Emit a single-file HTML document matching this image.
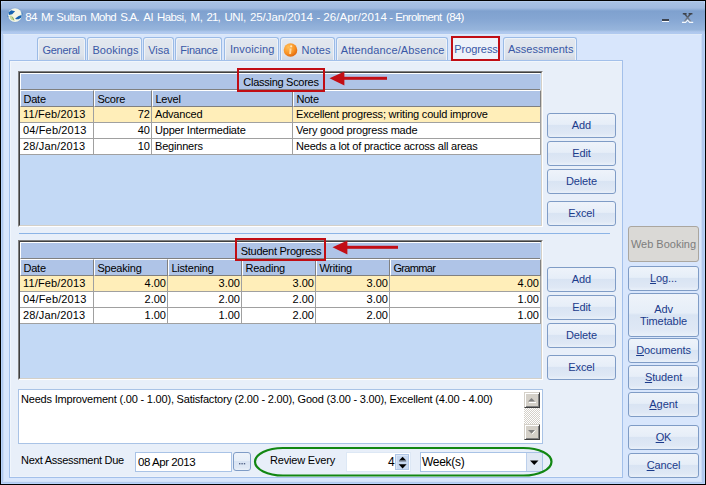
<!DOCTYPE html>
<html><head><meta charset="utf-8">
<style>
*{box-sizing:border-box;margin:0;padding:0}
html,body{width:706px;height:485px;overflow:hidden;background:#000}
body{font-family:"Liberation Sans",sans-serif;font-size:11px;color:#000;position:relative}
.a{position:absolute}
#win{left:0;top:0;width:706px;height:485px;background:#d8e6fc;border:1px solid #000;border-bottom:1px solid #000}
#frameL{left:1px;top:1px;width:1px;height:483px;background:#b6cdef}
#frameR{left:702px;top:33px;width:3px;height:451px;background:#b0c8ee}
#frameB{left:1px;top:483px;width:704px;height:1px;background:#b0c8ee}
#title{left:1px;top:1px;width:704px;height:33px;
 background:linear-gradient(to bottom,#c0d5f3 0px,#a8c1e4 1px,#a0bae0 7px,#7fa1cf 10px,#85a6d3 18px,#97b5dc 29px,#a6c1e5 30px,#afc8ee 31px,#b1caef 33px);
 border-radius:5px 5px 0 0}
.tw{position:absolute;top:10px;color:#fff;font-size:11.5px;letter-spacing:-0.3px;white-space:nowrap;line-height:14px}
#tabs .t{position:absolute;top:37px;height:23px;border:1px solid #9bbbe6;border-bottom:none;border-radius:3px 3px 0 0;background:linear-gradient(to bottom,#e3e8ef 0%,#dde3eb 75%,#d1d8e3 100%);box-shadow:inset 1px 1px 0 #eef2f8,inset -1px 0 0 #eef2f8}
.tt{position:absolute;top:43px;color:#3a58a6;font-size:11px;line-height:14px;white-space:nowrap}
#panel{left:9px;top:60px;width:614px;height:418px;border:1px solid #a3c0ea;background:#e8eff9;box-shadow:inset 1px 1px 0 #f1f6fc,inset 0 -1px 0 #edf3fb}
.grid{position:absolute;border-top:1px solid #808080;border-left:1px solid #808080;border-right:1px solid #fff;border-bottom:1px solid #fff}
.gin{position:absolute;left:0;top:0;right:0;bottom:0;border-top:1px solid #404040;border-left:1px solid #404040;border-right:1px solid #d4d0c8;border-bottom:1px solid #d4d0c8;background:#c3d9f5;overflow:hidden}
.gh{position:absolute;left:0;top:0;width:520px;height:17px;background:#afc4e7;border-top:1px solid #fff;border-left:1px solid #fff;border-bottom:1px solid #808080}
.gh span{position:absolute;white-space:nowrap;letter-spacing:-0.28px;line-height:13px}
.ch{position:absolute;top:17px;height:17px;background:#afc4e7;border-top:1px solid #fff;border-left:1px solid #fff;border-right:1px solid #808080;border-bottom:1px solid #808080;white-space:nowrap;padding-left:2.4px;padding-top:1px;line-height:14px;letter-spacing:-0.2px}
.row{position:absolute;left:0;height:16px}
.c{position:absolute;top:0;height:16px;border-right:1px solid #a0a0a0;border-bottom:1px solid #a0a0a0;white-space:nowrap;line-height:15px;padding:0 1px 0 3px;letter-spacing:-0.2px;overflow:hidden}
.r{text-align:right;letter-spacing:0}
.d{letter-spacing:0.15px}
.y{background:#ffeeb9}
.w{background:#fff}
.btn{position:absolute;border:1px solid #7f9cc6;border-radius:3px;background:linear-gradient(to bottom,#eef3fa 0%,#e6eef8 45%,#d9e4f3 50%,#dfe8f5 85%,#e9f0f9 100%);color:#1b3b8b;text-align:center;white-space:nowrap;letter-spacing:-0.1px}
.u{text-decoration:underline}
.sb{width:16px;height:16px;background:#d4d0c8;border-top:1px solid #d4d0c8;border-left:1px solid #d4d0c8;border-right:1px solid #404040;border-bottom:1px solid #404040;box-shadow:inset 1px 1px 0 #fff,inset -1px -1px 0 #808080}
.red{position:absolute;border:2px solid #c10d14}
</style></head><body>
<div id="win" class="a"></div>
<div class="a" style="left:1px;top:1px;width:1px;height:483px;background:#b9d5fc"></div>
<div class="a" style="left:2px;top:1px;width:1px;height:482px;background:#b1c9ee"></div>
<div class="a" style="left:3px;top:1px;width:1px;height:481px;background:#cadcf6"></div>
<div class="a" style="left:704px;top:1px;width:1px;height:483px;background:#b9d5fc"></div>
<div class="a" style="left:702px;top:1px;width:2px;height:482px;background:#b1c9ee"></div>
<div class="a" style="left:701px;top:1px;width:1px;height:481px;background:#cadcf6"></div>
<div class="a" style="left:1px;top:483px;width:704px;height:1px;background:#b9d5fc"></div>
<div class="a" style="left:2px;top:482px;width:702px;height:1px;background:#b1c9ee"></div>
<div class="a" style="left:3px;top:481px;width:699px;height:1px;background:#d2e2f7"></div>
<div class="a" style="left:3px;top:34px;width:699px;height:1px;background:#dfeaf8"></div>
<div id="title" class="a">
</div>
<!-- globe icon -->
<svg class="a" style="left:0px;top:0px" width="30" height="30" viewBox="0 0 30 30">
 <circle cx="15" cy="15.1" r="7.6" fill="#6f9fd6" opacity="0.35"/>
 <circle cx="15" cy="15.1" r="6.9" fill="#f3f5e6"/>
 <path d="M9.5 16 Q11 15 12.5 16.5 L14 19.5 Q12 21 10.5 19 Z" fill="#b9d08e" opacity="0.85"/>
 <path d="M12.5 17 L14 20.5" stroke="#7fa84a" stroke-width="1" opacity="0.8"/>
 <path d="M8.5 12.6 L11.1 10.2 L15.1 11.3 L12.2 14.3 L8.9 14.9 Z" fill="#1462b0"/>
 <path d="M15.2 18.5 L18.6 16.1 L21.6 15 L21.4 17.4 L18.6 19.3 L16 19.3 Z" fill="#1462b0"/>
 <path d="M21.6 12 L22.6 13 L22.4 15.5 L21.6 15 Z" fill="#2a70b8" opacity="0.7"/>
 <path d="M7.6 15 L8.6 16.2 L8.4 17.6 L7.4 16.8 Z" fill="#2a70b8" opacity="0.6"/>
</svg>
<span class="tw" style="left:25.2px;letter-spacing:-0.59px">84</span><span class="tw" style="left:41.0px;letter-spacing:-0.9px">Mr</span><span class="tw" style="left:56.3px;letter-spacing:-0.44px">Sultan</span><span class="tw" style="left:90.3px;letter-spacing:-0.79px">Mohd</span><span class="tw" style="left:120.3px;letter-spacing:-0.78px">S.A.</span><span class="tw" style="left:143.3px;letter-spacing:-0.23px">Al</span><span class="tw" style="left:156.9px;letter-spacing:-0.54px">Habsi,</span><span class="tw" style="left:190.4px;letter-spacing:-0.27px">M,</span><span class="tw" style="left:206.5px;letter-spacing:-0.84px">21,</span><span class="tw" style="left:224.4px;letter-spacing:-0.37px">UNI,</span><span class="tw" style="left:249.9px;letter-spacing:-0.03px">25/Jan/2014</span><span class="tw" style="left:316.5px;letter-spacing:0px">-</span><span class="tw" style="left:323.3px;letter-spacing:0.09px">26/Apr/2014</span><span class="tw" style="left:389.3px;letter-spacing:0px">-</span><span class="tw" style="left:395.2px;letter-spacing:-0.69px">Enrolment</span><span class="tw" style="left:446.1px;letter-spacing:-0.75px">(84)</span>
<!-- min / close -->
<div class="a" style="left:662px;top:19px;width:7px;height:2px;background:#3d4450"></div>
<div class="a" style="left:662px;top:21px;width:7px;height:1px;background:#f4f8fd"></div>
<svg class="a" style="left:681px;top:12px" width="14" height="12" viewBox="0 0 14 12">
 <defs><linearGradient id="xg" x1="0" y1="0" x2="0" y2="1"><stop offset="0" stop-color="#3a3f48"/><stop offset="1" stop-color="#8d9aae"/></linearGradient></defs>
 <path d="M1.8 1 H5.6 V2.4 H1.8 Z M7.6 1 H11.4 V2.4 H7.6 Z" fill="#3d434c"/>
 <path d="M3.6 1.8 L10 9.8 M9.6 1.8 L3.2 9.8" stroke="url(#xg)" stroke-width="1.5" fill="none"/>
 <path d="M1 10.4 H4.6 L6.6 8.2 L8.6 10.4 H12.2" stroke="#f4f8fd" stroke-width="1.1" fill="none"/>
</svg>

<div id="panel" class="a"></div>

<div id="tabs">
 <div class="t" style="left:37px;width:49px;"></div><span class="tt" style="left:42.4px;letter-spacing:-0.25px">General</span>
 <div class="t" style="left:87px;width:55px;"></div><span class="tt" style="left:92.4px;letter-spacing:0.12px">Bookings</span>
 <div class="t" style="left:143px;width:31px;"></div><span class="tt" style="left:148.2px;letter-spacing:0px">Visa</span>
 <div class="t" style="left:175px;width:47px;"></div><span class="tt" style="left:180.3px;letter-spacing:-0.25px">Finance</span>
 <div class="t" style="left:224px;width:55px;"></div><span class="tt" style="left:229.9px;top:42px;letter-spacing:0.13px">Invoicing</span>
 <div class="t" style="left:280px;width:55px;"></div><span class="tt" style="left:301.5px;letter-spacing:0.05px">Notes</span>
 <div class="t" style="left:336px;width:112px;"></div><span class="tt" style="left:340.7px;letter-spacing:0.13px">Attendance/Absence</span>
 <div class="t" style="left:451px;width:49px;background:#edf2fa;border-color:#c5d7ef;"></div><span class="tt" style="left:454.3px;top:42px;letter-spacing:-0.07px">Progress</span>
 <div class="t" style="left:503px;width:74px;"></div><span class="tt" style="left:508.0px;top:42px;letter-spacing:0px">Assessments</span>
</div>
<svg class="a" style="left:283px;top:42px" width="15" height="15" viewBox="0 0 15 15">
 <defs><radialGradient id="og" cx="0.35" cy="0.3" r="0.75"><stop offset="0" stop-color="#ffbf5a"/><stop offset="0.6" stop-color="#f99426"/><stop offset="1" stop-color="#e0660c"/></radialGradient></defs>
 <circle cx="7.5" cy="8" r="6.8" fill="url(#og)"/>
 <circle cx="8.2" cy="4.3" r="1.1" fill="#ffe9c0"/>
 <path d="M6.6 6.5 L8.6 6.5 L8 12 L6.2 12 Z" fill="#ffd8a0"/>
</svg>

<!-- GRID 1 -->
<div class="grid" style="left:18px;top:71px;width:525px;height:156px">
 <div class="gin">
  <div class="gh"><span style="left:0;width:520px;text-align:center;top:2px">Classing Scores</span></div>
  <div class="ch" style="left:0;width:74px">Date</div>
  <div class="ch" style="left:74px;width:58px">Score</div>
  <div class="ch" style="left:132px;width:141px">Level</div>
  <div class="ch" style="left:273px;width:248px">Note</div>
  <div class="row" style="top:34px">
   <div class="c y d" style="left:0;width:74px">11/Feb/2013</div>
   <div class="c y r" style="left:74px;width:58px">72</div>
   <div class="c y" style="left:132px;width:141px">Advanced</div>
   <div class="c y" style="left:273px;width:248px">Excellent progress; writing could improve</div>
  </div>
  <div class="row" style="top:50px">
   <div class="c w d" style="left:0;width:74px">04/Feb/2013</div>
   <div class="c w r" style="left:74px;width:58px">40</div>
   <div class="c w" style="left:132px;width:141px">Upper Intermediate</div>
   <div class="c w" style="left:273px;width:248px">Very good progress made</div>
  </div>
  <div class="row" style="top:66px">
   <div class="c w d" style="left:0;width:74px">28/Jan/2013</div>
   <div class="c w r" style="left:74px;width:58px">10</div>
   <div class="c w" style="left:132px;width:141px">Beginners</div>
   <div class="c w" style="left:273px;width:248px">Needs a lot of practice across all areas</div>
  </div>
 </div>
</div>

<div class="btn" style="left:547px;top:113px;width:69px;height:25px;line-height:23px">Add</div>
<div class="btn" style="left:547px;top:141px;width:69px;height:25px;line-height:23px">Edit</div>
<div class="btn" style="left:547px;top:169px;width:69px;height:25px;line-height:23px">Delete</div>
<div class="btn" style="left:547px;top:201px;width:69px;height:25px;line-height:23px">Excel</div>

<div class="a" style="left:19px;top:233px;width:591px;height:1px;background:#8cb4e6"></div>

<!-- GRID 2 -->
<div class="grid" style="left:18px;top:240px;width:525px;height:140px">
 <div class="gin">
  <div class="gh"><span style="left:0;width:520px;text-align:center;top:2px">Student Progress</span></div>
  <div class="ch" style="left:0;width:74px">Date</div>
  <div class="ch" style="left:74px;width:74px">Speaking</div>
  <div class="ch" style="left:148px;width:74px">Listening</div>
  <div class="ch" style="left:222px;width:74px">Reading</div>
  <div class="ch" style="left:296px;width:74px">Writing</div>
  <div class="ch" style="left:370px;width:151px;letter-spacing:-0.65px">Grammar</div>
  <div class="row" style="top:34px">
   <div class="c y d" style="left:0;width:74px">11/Feb/2013</div>
   <div class="c y r" style="left:74px;width:74px">4.00</div>
   <div class="c y r" style="left:148px;width:74px">3.00</div>
   <div class="c y r" style="left:222px;width:74px">3.00</div>
   <div class="c y r" style="left:296px;width:74px">3.00</div>
   <div class="c y r" style="left:370px;width:151px">4.00</div>
  </div>
  <div class="row" style="top:50px">
   <div class="c w d" style="left:0;width:74px">04/Feb/2013</div>
   <div class="c w r" style="left:74px;width:74px">2.00</div>
   <div class="c w r" style="left:148px;width:74px">2.00</div>
   <div class="c w r" style="left:222px;width:74px">2.00</div>
   <div class="c w r" style="left:296px;width:74px">3.00</div>
   <div class="c w r" style="left:370px;width:151px">1.00</div>
  </div>
  <div class="row" style="top:66px">
   <div class="c w d" style="left:0;width:74px">28/Jan/2013</div>
   <div class="c w r" style="left:74px;width:74px">1.00</div>
   <div class="c w r" style="left:148px;width:74px">1.00</div>
   <div class="c w r" style="left:222px;width:74px">2.00</div>
   <div class="c w r" style="left:296px;width:74px">2.00</div>
   <div class="c w r" style="left:370px;width:151px">1.00</div>
  </div>
 </div>
</div>

<div class="btn" style="left:547px;top:267px;width:69px;height:25px;line-height:23px">Add</div>
<div class="btn" style="left:547px;top:295px;width:69px;height:25px;line-height:23px">Edit</div>
<div class="btn" style="left:547px;top:323px;width:69px;height:25px;line-height:23px">Delete</div>
<div class="btn" style="left:547px;top:355px;width:69px;height:25px;line-height:23px">Excel</div>

<!-- memo -->
<div class="a" style="left:18px;top:389px;width:525px;height:55px;background:#fff;border:1px solid #a9c3e6"></div>
<div class="a" style="left:21px;top:393px;white-space:nowrap;letter-spacing:-0.2px;line-height:13px">Needs Improvement (.00 - 1.00), Satisfactory (2.00 - 2.00), Good (3.00 - 3.00), Excellent (4.00 - 4.00)</div>

<!-- bottom row -->
<div class="a" style="left:21px;top:454px;white-space:nowrap;letter-spacing:-0.28px;line-height:13px">Next Assessment Due</div>
<div class="a" style="left:135px;top:452px;width:97px;height:20px;background:#fff;border:1px solid #a9c3e6"></div>
<div class="a" style="left:138px;top:455px;white-space:nowrap;font-size:11.5px;letter-spacing:-0.45px;line-height:14px">08 Apr 2013</div>
<div class="btn" style="left:233px;top:452px;width:18px;height:19px"></div>
<svg class="a" style="left:239px;top:463px" width="7" height="2"><rect x="0" y="0" width="1.4" height="1.4" fill="#56678a"/><rect x="2.4" y="0" width="1.4" height="1.4" fill="#56678a"/><rect x="4.8" y="0" width="1.4" height="1.4" fill="#56678a"/></svg>

<div class="a" style="left:270px;top:454px;white-space:nowrap;letter-spacing:-0.18px;line-height:13px">Review Every</div>
<div class="a" style="left:346px;top:452px;width:65px;height:20px;background:#fff;border:1px solid #dde8f5"></div>
<div class="a" style="left:388px;top:455px;font-size:12px;line-height:14px">4</div>
<div class="a" style="left:420px;top:452px;width:123px;height:20px;background:#fff;border:1px solid #a9c3e6"></div>
<div class="a" style="left:422px;top:455px;font-size:12px;letter-spacing:-0.3px;line-height:14px">Week(s)</div>

<!-- right buttons -->
<div class="a" style="left:628px;top:226px;width:71px;height:36px;border:1px solid #b4b4b4;border-radius:3px;background:#dad9d6;color:#7d7d7d;border-color:#aaa69f;text-align:center;line-height:34px;white-space:nowrap">Web Booking</div>
<div class="btn" style="left:628px;top:266px;width:71px;height:25px;line-height:22px"><span class="u">L</span>og...</div>
<div class="btn" style="left:628px;top:293px;width:71px;height:44px;line-height:12px;padding-top:9px">Adv<br>Timetable</div>
<div class="btn" style="left:628px;top:338px;width:71px;height:25px;line-height:22px"><span class="u">D</span>ocuments</div>
<div class="btn" style="left:628px;top:365px;width:71px;height:25px;line-height:22px"><span class="u">S</span>tudent</div>
<div class="btn" style="left:628px;top:392px;width:71px;height:25px;line-height:22px"><span class="u">A</span>gent</div>
<div class="btn" style="left:628px;top:425px;width:71px;height:25px;line-height:22px"><span class="u">O</span>K</div>
<div class="btn" style="left:628px;top:453px;width:71px;height:25px;line-height:22px"><span class="u">C</span>ancel</div>


<!-- arrows -->
<svg class="a" style="left:328px;top:70px" width="62" height="18" viewBox="0 0 62 18">
 <path d="M1.5 8.3 L16.4 1.4 L16.4 15.5 Z" fill="#c30e15"/>
 <rect x="15" y="6.8" width="44" height="3" fill="#c30e15"/>
</svg>
<svg class="a" style="left:331px;top:239px" width="70" height="18" viewBox="0 0 70 18">
 <path d="M1.5 8.3 L16.4 1.4 L16.4 15.5 Z" fill="#c30e15"/>
 <rect x="15" y="6.8" width="52" height="3" fill="#c30e15"/>
</svg>
<!-- scrollbar -->
<div class="a" style="left:524px;top:392px;width:16px;height:48px;background-color:#fff;background-image:repeating-conic-gradient(#d4d0c8 0% 25%, #fff 0% 50%);background-size:2px 2px"></div>
<div class="a sb" style="left:524px;top:392px"></div>
<svg class="a" style="left:524px;top:392px" width="16" height="16"><path d="M4 9.6 H11 L7.5 6.1 Z" fill="#808080"/><rect x="5" y="10" width="7" height="1" fill="#fff"/></svg>
<div class="a sb" style="left:524px;top:424px"></div>
<svg class="a" style="left:524px;top:424px" width="16" height="16"><path d="M4 6 H11 L7.5 9.6 Z" fill="#808080"/><path d="M11.4 6.4 L8 10.2" stroke="#fff" stroke-width="1"/></svg>
<!-- spin -->
<div class="a" style="left:395px;top:454px;width:14px;height:16px;background:#c8d9f1;border:1px solid #b0c6e6;box-shadow:inset 1px 1px 0 #dce7f6"></div>
<svg class="a" style="left:395px;top:454px" width="14" height="16" viewBox="0 0 14 16">
 <path d="M4 6.6 L11.2 6.6 L7.6 2.8 Z" fill="#000"/>
 <rect x="4" y="6.8" width="7.2" height="1.2" fill="#7d8898" opacity="0.7"/>
 <path d="M3.6 10.2 L11.6 10.2 L7.6 14.6 Z" fill="#000"/>
</svg>
<!-- combo drop -->
<div class="a" style="left:526px;top:453px;width:16px;height:18px;background:#e0e8f4;border-left:1px solid #bcd0ec"></div>
<svg class="a" style="left:526px;top:453px" width="16" height="18"><path d="M4 7.5 H12.5 L8.25 12 Z" fill="#000"/></svg>

<!-- annotations -->
<div class="red" style="left:451px;top:36px;width:49px;height:25px"></div>
<div class="red" style="left:237px;top:68px;width:88px;height:24px"></div>
<div class="red" style="left:235px;top:238px;width:91px;height:23px"></div>
<svg class="a" style="left:250px;top:443px" width="310" height="40" viewBox="0 0 310 40"><rect x="5" y="5" width="296.5" height="27.5" rx="28" ry="13.75" fill="none" stroke="#128712" stroke-width="2.2"/></svg>
</body></html>
